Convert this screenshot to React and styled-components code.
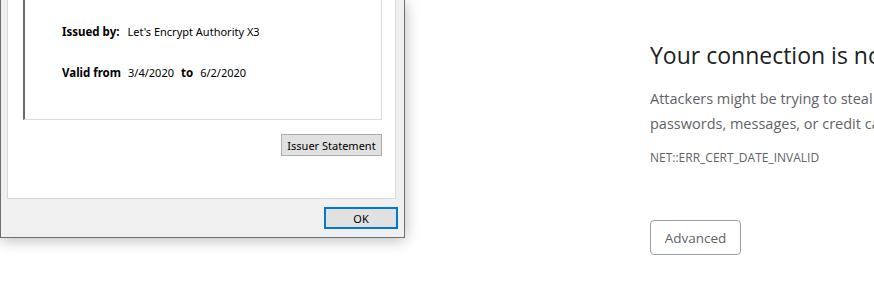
import React from 'react'
import styled, { createGlobalStyle } from 'styled-components'

const GlobalStyle = createGlobalStyle`
  html, body {
    margin: 0;
    padding: 0;
    background: #fff;
  }
  body {
    width: 874px;
    height: 293px;
    overflow: hidden;
  }
`

const Page = styled.div`
  display: flex;
  align-items: flex-start;
  width: 874px;
  height: 293px;
  overflow: hidden;
`

const Dialog = styled.div`
  flex: none;
  width: 403px;
  height: 237px;
  display: flex;
  flex-direction: column;
  background: #f0f0f0;
  border: 1px solid #6e6e6e;
  border-top: none;
  box-shadow: 0 2px 14px rgba(0, 0, 0, 0.28);
  font-family: 'Noto Sans', 'Liberation Sans', sans-serif;
  font-size: 11px;
  color: #000;
`

const Panel = styled.div`
  height: 199px;
  box-sizing: border-box;
  margin: 0 8px 0 6px;
  background: #fff;
  border: 1px solid #d9d9d9;
  border-top: none;
  padding: 0 13px 0 15px;
  display: flex;
  flex-direction: column;
`

const CertFrame = styled.div`
  height: 120px;
  box-sizing: border-box;
  border-left: 2px solid #6b6b6b;
  border-right: 1px solid #dcdcdc;
  border-bottom: 1px solid #dcdcdc;
  padding: 24px 0 0 37px;
  display: flex;
  flex-direction: column;
  gap: 26px;
`

const Field = styled.div`
  display: flex;
  align-items: baseline;
  gap: ${({ $gap = 7 }) => $gap}px;
  line-height: 15px;
`

const Label = styled.span`
  font-weight: bold;
  font-size: 11.5px;
`

const Actions = styled.div`
  display: flex;
  justify-content: flex-end;
  margin-top: ${({ $top }) => $top}px;
  padding-right: ${({ $right = 0 }) => $right}px;
`

const WinButton = styled.button`
  box-sizing: border-box;
  width: ${({ $width }) => $width}px;
  height: ${({ $height = 22 }) => $height}px;
  padding: 0;
  background: #e1e1e1;
  border: ${({ $focused }) => ($focused ? '2px solid #0078d7' : '1px solid #adadad')};
  font-family: inherit;
  font-size: 11px;
  color: #000;
`

const Main = styled.div`
  flex: none;
  width: 400px;
  margin: 40px 0 0 245px;
  font-family: 'Open Sans', 'Noto Sans', sans-serif;
  white-space: nowrap;
`

const Heading = styled.h1`
  margin: 0;
  font-size: 23px;
  font-weight: 400;
  line-height: 30px;
  color: #202124;
`

const Text = styled.p`
  margin: 16px 0 0;
  font-size: 14.5px;
  line-height: 25px;
  color: #5f6368;
`

const ErrorCode = styled.div`
  margin-top: 14px;
  font-size: 12px;
  line-height: 16px;
  color: #5f6368;
`

const SecondaryButton = styled.button`
  box-sizing: border-box;
  margin-top: 54px;
  width: 91px;
  height: 35px;
  background: #fff;
  border: 1px solid #9aa0a6;
  border-radius: 4px;
  font-family: inherit;
  font-size: 13.5px;
  color: #5f6368;
`

export default function App() {
  return (
    <>
      <GlobalStyle />
      <Page>
        <Dialog>
          <Panel>
            <CertFrame>
              <Field $gap={8}>
                <Label>Issued by:</Label>
                <span>Let's Encrypt Authority X3</span>
              </Field>
              <Field>
                <Label>Valid from</Label>
                <span>3/4/2020</span>
                <Label>to</Label>
                <span>6/2/2020</span>
              </Field>
            </CertFrame>
            <Actions $top={14}>
              <WinButton $width={101}>Issuer Statement</WinButton>
            </Actions>
          </Panel>
          <Actions $top={8} $right={6}>
            <WinButton $width={74} $focused>OK</WinButton>
          </Actions>
        </Dialog>
        <Main>
          <Heading>Your connection is not private</Heading>
          <Text>
            Attackers might be trying to steal your information from
            <br />
            passwords, messages, or credit cards).
          </Text>
          <ErrorCode>NET::ERR_CERT_DATE_INVALID</ErrorCode>
          <SecondaryButton>Advanced</SecondaryButton>
        </Main>
      </Page>
    </>
  )
}
